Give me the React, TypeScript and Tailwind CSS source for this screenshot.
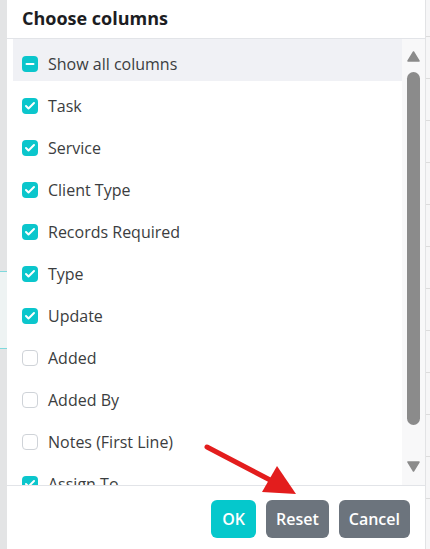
import { Check, Minus } from "lucide-react";

const columns = [
  { label: "Task", on: true },
  { label: "Service", on: true },
  { label: "Client Type", on: true },
  { label: "Records Required", on: true },
  { label: "Type", on: true },
  { label: "Update", on: true },
  { label: "Added", on: false },
  { label: "Added By", on: false },
  { label: "Notes (First Line)", on: false },
  { label: "Assign To", on: true },
];

function Box({ state }: { state: "on" | "off" | "some" }) {
  if (state === "off") {
    return <span className="w-4 h-4 shrink-0 rounded-[4px] border border-[#cfd3d8] bg-white" />;
  }
  return (
    <span className="w-4 h-4 shrink-0 rounded-[4px] bg-[#0bc6cc] flex items-center justify-center text-white">
      {state === "on" ? <Check className="w-3 h-3" strokeWidth={4} /> : <Minus className="w-3 h-3" strokeWidth={4} />}
    </span>
  );
}

export default function App() {
  return (
    <div
      className="relative w-[430px] h-[549px] flex overflow-hidden bg-white text-[#3b3d40]"
      style={{ fontFamily: '"Open Sans", "Noto Sans", sans-serif' }}
    >
      {/* page behind the dialog */}
      <div className="w-[7px] shrink-0 flex flex-col bg-[#e3e4e5]">
        <div className="h-[271px]" />
        <div className="h-[78px] border-y border-[#7fd9dc] bg-[#eef3f3]" />
      </div>

      <div className="w-[419px] shrink-0 flex flex-col bg-white border-r border-[#e2e3e5]">
        <div className="h-[39px] shrink-0 border-b border-[#e2e4e8] px-[15px] flex items-center">
          <h2 className="text-[18px] font-bold text-[#1c1d22] leading-none -mt-[2px]">Choose columns</h2>
        </div>

        <div className="h-[446px] shrink-0 flex overflow-hidden">
          <ul className="flex-1 pl-[6px] overflow-hidden">
            <li className="h-[42px] pt-2 pl-[9px] flex items-center gap-[10px] bg-[#f0f1f5] text-[16px]">
              <Box state="some" />
              Show all columns
            </li>
            {columns.map((c) => (
              <li key={c.label} className="h-[42px] pt-2 pl-[9px] flex items-center gap-[10px] text-[16px]">
                <Box state={c.on ? "on" : "off"} />
                {c.label}
              </li>
            ))}
          </ul>
          <div className="w-[23px] shrink-0 bg-[#f8f8f9] flex flex-col items-center pt-[12px]">
            <svg width="13" height="11" viewBox="0 0 13 11">
              <path d="M6.5 1 L12 10 H1 Z" fill="#8b8b8b" stroke="#8b8b8b" strokeLinejoin="round" strokeWidth="1.5" />
            </svg>
            <div className="mt-[10px] w-[13px] h-[353px] rounded-full bg-[#8b8b8b]" />
            <svg className="mt-[36px]" width="13" height="11" viewBox="0 0 13 11">
              <path d="M1 1 H12 L6.5 10 Z" fill="#8b8b8b" stroke="#8b8b8b" strokeLinejoin="round" strokeWidth="1.5" />
            </svg>
          </div>
        </div>

        <div className="flex-1 border-t border-[#e2e4e8] pt-[14px] pr-[15px] flex justify-end items-start gap-[10px]">
          <button className="h-[38px] px-[11px] rounded-[6px] bg-[#05c8cc] text-white text-[16px] font-semibold">OK</button>
          <button className="h-[38px] px-[10px] rounded-[6px] bg-[#6c747d] text-white text-[16px] font-semibold">Reset</button>
          <button className="h-[38px] px-[10px] rounded-[6px] bg-[#6c747d] text-white text-[16px] font-semibold">Cancel</button>
        </div>
      </div>

      <div className="flex-1 flex flex-col bg-[#f6f6f7]">
        <div className="h-[37px] border-b border-[#dcdcdc]" />
        {Array.from({ length: 11 }).map((_, i) => (
          <div key={i} className="h-[42px] shrink-0 border-b border-[#dcdcdc]" />
        ))}
      </div>

      {/* annotation arrow */}
      <svg className="absolute left-0 top-0 pointer-events-none" width="430" height="549">
        <line x1="207" y1="447" x2="272" y2="481" stroke="#e31d1d" strokeWidth="5" strokeLinecap="round" />
        <polygon points="296,494 262,492 277,466" fill="#e31d1d" />
      </svg>
    </div>
  );
}
